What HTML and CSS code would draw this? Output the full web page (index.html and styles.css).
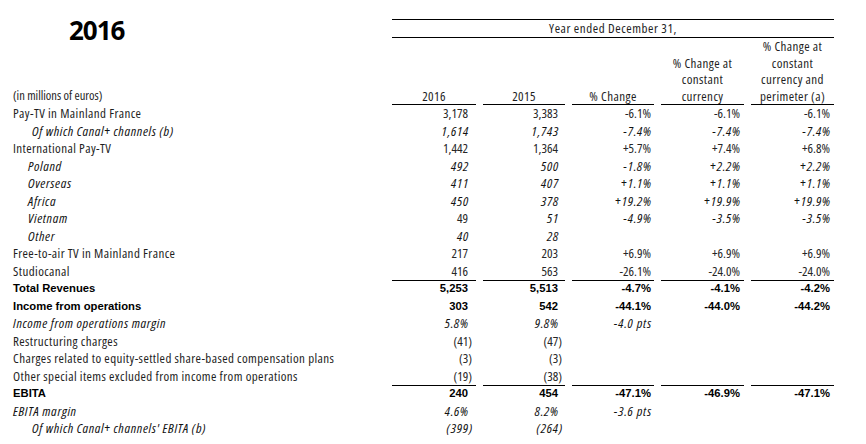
FILE: index.html
```html
<!DOCTYPE html>
<html lang="en">
<head>
<meta charset="utf-8">
<title>2016</title>
<link rel="stylesheet" href="styles.css">
</head>
<body>
<div class="page">
  <div class="head">
    <div class="title">2016</div>
    <div class="period">Year ended December 31,</div>
    <div class="units">(in millions of euros)</div>
    <div class="colh">2016</div>
    <div class="colh">2015</div>
    <div class="colh">% Change</div>
    <div class="colh">% Change at<br>constant<br>currency</div>
    <div class="colh">% Change at<br>constant<br>currency and<br>perimeter (a)</div>
  </div>

  <div class="row"><div class="lbl">Pay-TV in Mainland France</div><div class="num">3,178</div><div class="num">3,383</div><div class="num">-6.1%</div><div class="num">-6.1%</div><div class="num">-6.1%</div></div>
  <div class="row i"><div class="lbl ind2">Of which Canal+ channels (b)</div><div class="num">1,614</div><div class="num">1,743</div><div class="num">-7.4%</div><div class="num">-7.4%</div><div class="num">-7.4%</div></div>
  <div class="row"><div class="lbl">International Pay-TV</div><div class="num">1,442</div><div class="num">1,364</div><div class="num">+5.7%</div><div class="num">+7.4%</div><div class="num">+6.8%</div></div>
  <div class="row i"><div class="lbl ind1">Poland</div><div class="num">492</div><div class="num">500</div><div class="num">-1.8%</div><div class="num">+2.2%</div><div class="num">+2.2%</div></div>
  <div class="row i"><div class="lbl ind1">Overseas</div><div class="num">411</div><div class="num">407</div><div class="num">+1.1%</div><div class="num">+1.1%</div><div class="num">+1.1%</div></div>
  <div class="row i"><div class="lbl ind1">Africa</div><div class="num">450</div><div class="num">378</div><div class="num">+19.2%</div><div class="num">+19.9%</div><div class="num">+19.9%</div></div>
  <div class="row i"><div class="lbl ind1">Vietnam</div><div class="num up">49</div><div class="num">51</div><div class="num">-4.9%</div><div class="num">-3.5%</div><div class="num">-3.5%</div></div>
  <div class="row i"><div class="lbl ind1">Other</div><div class="num">40</div><div class="num">28</div><div class="num"></div><div class="num"></div><div class="num"></div></div>
  <div class="row"><div class="lbl">Free-to-air TV in Mainland France</div><div class="num">217</div><div class="num">203</div><div class="num">+6.9%</div><div class="num">+6.9%</div><div class="num">+6.9%</div></div>
  <div class="row"><div class="lbl">Studiocanal</div><div class="num">416</div><div class="num">563</div><div class="num">-26.1%</div><div class="num">-24.0%</div><div class="num">-24.0%</div></div>
  <div class="row b rule"><div class="lbl">Total Revenues</div><div class="num">5,253</div><div class="num">5,513</div><div class="num">-4.7%</div><div class="num">-4.1%</div><div class="num">-4.2%</div></div>
  <div class="row b"><div class="lbl">Income from operations</div><div class="num">303</div><div class="num">542</div><div class="num">-44.1%</div><div class="num">-44.0%</div><div class="num">-44.2%</div></div>
  <div class="row i"><div class="lbl">Income from operations margin</div><div class="num">5.8%</div><div class="num">9.8%</div><div class="num">-4.0 pts</div><div class="num"></div><div class="num"></div></div>
  <div class="row"><div class="lbl">Restructuring charges</div><div class="num neg">(41)</div><div class="num neg">(47)</div><div class="num"></div><div class="num"></div><div class="num"></div></div>
  <div class="row"><div class="lbl">Charges related to equity-settled share-based compensation plans</div><div class="num neg">(3)</div><div class="num neg">(3)</div><div class="num"></div><div class="num"></div><div class="num"></div></div>
  <div class="row"><div class="lbl">Other special items excluded from income from operations</div><div class="num neg">(19)</div><div class="num neg">(38)</div><div class="num"></div><div class="num"></div><div class="num"></div></div>
  <div class="row b rule"><div class="lbl">EBITA</div><div class="num">240</div><div class="num">454</div><div class="num">-47.1%</div><div class="num">-46.9%</div><div class="num">-47.1%</div></div>
  <div class="row i"><div class="lbl">EBITA margin</div><div class="num">4.6%</div><div class="num">8.2%</div><div class="num">-3.6 pts</div><div class="num"></div><div class="num"></div></div>
  <div class="row i"><div class="lbl ind2">Of which Canal+ channels' EBITA (b)</div><div class="num neg">(399)</div><div class="num neg">(264)</div><div class="num"></div><div class="num"></div><div class="num"></div></div>
</div>
</body>
</html>
```

FILE: styles.css
```css
html, body {
  margin: 0;
  background: #ffffff;
}

.page {
  padding: 19px 0 0 13px;
  font-family: "Open Sans", "Liberation Sans", Arial, sans-serif;
  font-stretch: 75%;
  font-size: 13px;
  letter-spacing: 0.4px;
  color: #1e1e1e;
}

.head,
.row {
  display: grid;
  grid-template-columns: 372px 84px 82px 82px 83px 83px;
  column-gap: 7px;
}

.title {
  grid-column: 1;
  grid-row: 1 / 3;
  align-self: start;
  margin-top: 1px;
  padding-left: 56px;
  font-family: "Open Sans", "Liberation Sans", sans-serif;
  font-stretch: 100%;
  font-weight: 700;
  font-size: 26px;
  line-height: 20px;
  letter-spacing: -1px;
  color: #000000;
}

.period {
  grid-column: 2 / -1;
  grid-row: 1;
  border-top: 1px solid #000000;
  border-bottom: 1px solid #000000;
  text-align: center;
  line-height: 17px;
  letter-spacing: 0.55px;
}

.units {
  grid-column: 1;
  grid-row: 2;
  align-self: end;
  font-size: 12.5px;
  letter-spacing: 0;
  line-height: 16.5px;
  padding-bottom: 1px;
}

.colh {
  grid-row: 2;
  align-self: end;
  text-align: center;
  line-height: 16.5px;
  border-bottom: 1px solid #000000;
}

.row {
  height: 17.5px;
  line-height: 17.5px;
}

.lbl {
  white-space: nowrap;
}

.ind1 {
  padding-left: 15px;
}

.ind2 {
  padding-left: 19px;
}

.num {
  text-align: right;
  white-space: nowrap;
  color: #262626;
  letter-spacing: 0;
}

.num:nth-child(2) { padding-right: 8px; }
.num:nth-child(3) { padding-right: 7px; }
.num:nth-child(4) { padding-right: 3px; }
.num:nth-child(5) { padding-right: 4px; }
.num:nth-child(6) { padding-right: 4px; }

.num.neg:nth-child(2) { padding-right: 4px; }
.num.neg:nth-child(3) { padding-right: 3px; }

.i {
  font-style: italic;
  font-size: 13.5px;
  color: #111111;
}

.i .lbl {
  letter-spacing: 0.62px;
}

.i .num {
  letter-spacing: 0.8px;
  color: #111111;
}

.i .num:nth-child(2) { padding-right: 7px; }
.i .num:nth-child(3) { padding-right: 6px; }
.i .num:nth-child(4) { padding-right: 2px; }
.i .num:nth-child(5) { padding-right: 3px; }
.i .num:nth-child(6) { padding-right: 3px; }
.i .num.neg:nth-child(2) { padding-right: 3px; }
.i .num.neg:nth-child(3) { padding-right: 2px; }

.i .up {
  font-style: normal;
  font-size: 13px;
  letter-spacing: 0;
  color: #262626;
}

.i .up:nth-child(2) { padding-right: 8px; }

.b {
  font-family: "Liberation Sans", Arial, sans-serif;
  font-stretch: 100%;
  font-weight: 700;
  font-size: 11.25px;
  letter-spacing: 0;
  color: #000000;
}

.b .num {
  color: #000000;
}

.rule .num {
  box-shadow: inset 0 1px 0 #000000;
}
```
